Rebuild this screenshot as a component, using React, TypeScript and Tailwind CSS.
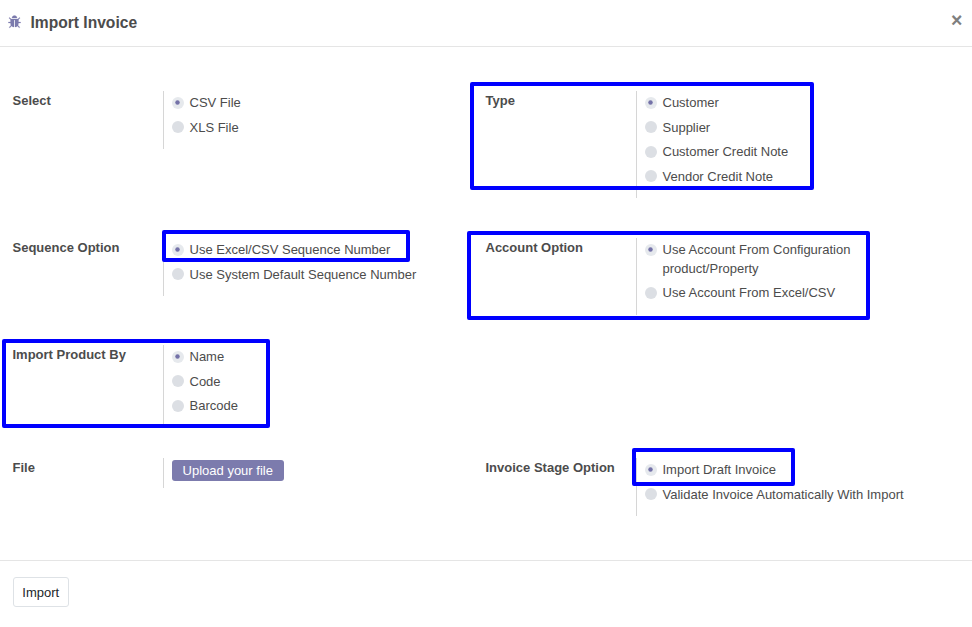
import React from "react";

function Radio({ checked }: { checked?: boolean }) {
  return (
    <span className={`mt-[2.9px] flex h-3 w-3 shrink-0 items-start rounded-full pl-[3px] pt-[3px] ${checked ? "bg-[#e6e9ed]" : "bg-[#dcdfe4]"}`}>
      {checked && (
        <svg className="h-[5px] w-[5px]" viewBox="0 0 5 5">
          <circle cx="2.5" cy="2.6" r="2.25" fill="#7472a8" />
        </svg>
      )}
    </span>
  );
}

function Field({ label, height, children }: { label: string; height: string; children: React.ReactNode }) {
  return (
    <div className="flex items-start">
      <div className="w-[150.5px] shrink-0 whitespace-nowrap font-bold leading-[19px]">{label}</div>
      <div className={`border-l border-[#d6d6d6] pl-2 ${height}`}>{children}</div>
    </div>
  );
}

function Options({ items }: { items: string[] }) {
  return (
    <div className="flex flex-col gap-[5.6px] pt-[3.05px]">
      {items.map((t, i) => (
        <div key={t} className="flex items-start">
          <Radio checked={i === 0} />
          <span className="ml-[5.5px] whitespace-pre leading-[18.9px]">{t}</span>
        </div>
      ))}
    </div>
  );
}

function Highlight({ className }: { className: string }) {
  return <div className={`absolute rounded-[2px] border-4 border-[#0000ff] ${className}`} />;
}

export default function App() {
  return (
    <div className="relative flex h-[627px] w-[972px] flex-col overflow-hidden bg-white font-['Liberation_Sans',Arial,sans-serif] text-[13px] text-[#4c4c4c]">
      <header className="flex h-[47px] shrink-0 items-start border-b border-[#e5e5e5]">
        <svg className="ml-2 mt-[15px] h-[14px] w-[13px]" viewBox="0 0 1664 1792" fill="#7c7bad" stroke="#7c7bad" strokeWidth="30">
          <path d="M1632 960q0 26-19 45t-45 19h-224q0 171-67 290l208 209q19 19 19 45t-19 45q-18 19-45 19t-45-19l-198-197q-5 5-15 13t-42 28.500-65 36.500-82 29-97 13v-896h-128v896q-51 0-101.500-13.500t-87-33-66-39-43.500-32.500l-15-14-183 207q-20 21-48 21-24 0-43-16-19-18-20.500-44.500t15.500-46.500l202-227q-58-114-58-274h-224q-26 0-45-19t-19-45 19-45 45-19h224v-294l-173-173q-19-19-19-45t19-45 45-19 45 19l173 173h844l173-173q19-19 45-19t45 19 19 45-19 45l-173 173v294h224q26 0 45 19t19 45zM1152 384h-640q0-133 93.500-226.500t226.500-93.500 226.500 93.500 93.500 226.500z" />
        </svg>
        <h1 className="ml-[9.5px] mt-[11px] text-[15.6px] font-bold leading-6">Import Invoice</h1>
        <button className="ml-auto mr-[9.5px] mt-[10px] text-[19.5px] font-bold leading-5 text-[#7f7f7f]">×</button>
      </header>
      <main className="grid h-[514px] shrink-0 grid-cols-[473px_1fr] grid-rows-[147px_107px_113px_1fr] border-b border-[#e5e5e5] pl-[12.5px] pt-[44px]">
        <Field label="Select" height="h-[58px]"><Options items={["CSV File", "XLS File"]} /></Field>
        <Field label="Type" height="h-[107px]"><Options items={["Customer", "Supplier", "Customer Credit Note", "Vendor Credit Note"]} /></Field>
        <Field label="Sequence Option" height="h-[58px]"><Options items={["Use Excel/CSV Sequence Number", "Use System Default Sequence Number"]} /></Field>
        <Field label="Account Option" height="h-[77px]"><Options items={["Use Account From Configuration\nproduct/Property", "Use Account From Excel/CSV"]} /></Field>
        <Field label="Import Product By" height="h-[82px]"><Options items={["Name", "Code", "Barcode"]} /></Field>
        <div />
        <Field label="File" height="h-[30px]">
          <button className="mt-[2px] block h-[21px] w-[112px] rounded-[3px] bg-[#7c7bad] pr-[0.5px] text-white leading-[21px]">Upload your file</button>
        </Field>
        <Field label="Invoice Stage Option" height="h-[58px]"><Options items={["Import Draft Invoice", "Validate Invoice Automatically With Import"]} /></Field>
      </main>
      <footer className="px-[13px] pt-[16px]">
        <button className="h-[30px] w-14 rounded-[3px] border border-[#dee2e6] pr-[0.5px] pt-px text-[#212529]">Import</button>
      </footer>
      <Highlight className="left-[470px] top-[82px] h-[108px] w-[344px]" />
      <Highlight className="left-[162px] top-[230px] h-8 w-[248px]" />
      <Highlight className="left-[467px] top-[231px] h-[89px] w-[403px]" />
      <Highlight className="left-[2px] top-[339px] h-[89px] w-[268px]" />
      <Highlight className="left-[632px] top-[448px] h-[38px] w-[163px]" />
    </div>
  );
}
